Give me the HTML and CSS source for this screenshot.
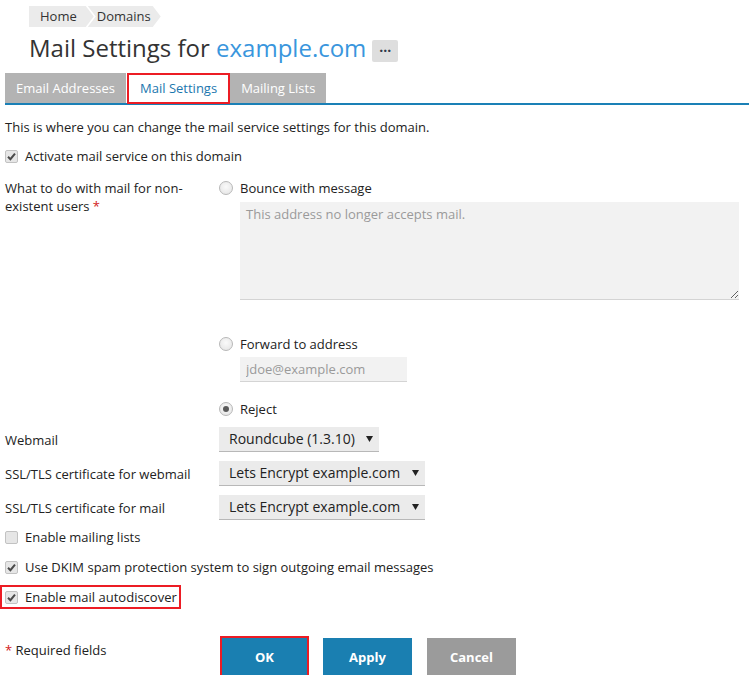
FILE: index.html
```html
<!DOCTYPE html>
<html>
<head>
<meta charset="utf-8">
<link rel="stylesheet" href="styles.css">
</head>
<body>
<div class="page">
  <div class="breadcrumbs">
    <span class="crumb">Home</span>
    <span class="crumb">Domains</span>
  </div>
  <div class="title-row">
    <h1 class="title">Mail Settings for <span class="domain">example.com</span></h1>
    <span class="more">&middot;&middot;&middot;</span>
  </div>
  <div class="tabs">
    <span class="tab">Email Addresses</span>
    <span class="tab active">Mail Settings</span>
    <span class="tab">Mailing Lists</span>
  </div>

  <div class="content">
    <p class="desc">This is where you can change the mail service settings for this domain.</p>

    <label class="check-row r-activate"><span class="cb on"><svg viewBox="0 0 13 13" width="13" height="13"><path d="M3 6.8 L5.4 9.2 L10 3.6" fill="none" stroke="#4a4a4a" stroke-width="2"/></svg></span>Activate mail service on this domain</label>

    <div class="form-row r-nonexist">
      <div class="flabel">What to do with mail for non-existent users <span class="req">*</span></div>
      <div class="fctrl">
        <div class="radio-line"><span class="rb"></span>Bounce with message</div>
        <div class="sub"><textarea class="ta" placeholder="This address no longer accepts mail."></textarea></div>
        <div class="radio-line r-forward"><span class="rb"></span>Forward to address</div>
        <div class="sub"><input class="inp" type="text" placeholder="jdoe@example.com"></div>
        <div class="radio-line r-reject"><span class="rb on"></span>Reject</div>
      </div>
    </div>

    <div class="form-row sel-row r-webmail">
      <div class="flabel">Webmail</div>
      <div class="fctrl"><div class="sel w160">Roundcube (1.3.10)<svg class="arr" width="7" height="6" viewBox="0 0 7 6"><path d="M0 0H7L3.5 6Z" fill="#222"/></svg></div></div>
    </div>
    <div class="form-row sel-row">
      <div class="flabel">SSL/TLS certificate for webmail</div>
      <div class="fctrl"><div class="sel w206">Lets Encrypt example.com<svg class="arr" width="7" height="6" viewBox="0 0 7 6"><path d="M0 0H7L3.5 6Z" fill="#222"/></svg></div></div>
    </div>
    <div class="form-row sel-row">
      <div class="flabel">SSL/TLS certificate for mail</div>
      <div class="fctrl"><div class="sel w206">Lets Encrypt example.com<svg class="arr" width="7" height="6" viewBox="0 0 7 6"><path d="M0 0H7L3.5 6Z" fill="#222"/></svg></div></div>
    </div>

    <label class="check-row r-lists"><span class="cb"></span>Enable mailing lists</label>
    <label class="check-row r-dkim"><span class="cb on"><svg viewBox="0 0 13 13" width="13" height="13"><path d="M3 6.8 L5.4 9.2 L10 3.6" fill="none" stroke="#4a4a4a" stroke-width="2"/></svg></span>Use DKIM spam protection system to sign outgoing email messages</label>
    <div class="highlight r-auto"><label class="check-row"><span class="cb on"><svg viewBox="0 0 13 13" width="13" height="13"><path d="M3 6.8 L5.4 9.2 L10 3.6" fill="none" stroke="#4a4a4a" stroke-width="2"/></svg></span>Enable mail autodiscover</label></div>

    <div class="actions">
      <div class="required"><span class="req">*</span> Required fields</div>
      <div class="buttons">
        <span class="btn-wrap"><button class="btn primary">OK</button></span>
        <button class="btn primary">Apply</button>
        <button class="btn grey">Cancel</button>
      </div>
    </div>
  </div>
</div>
</body>
</html>
```
FILE: styles.css
```css
* { box-sizing: border-box; }
html, body { margin: 0; padding: 0; background: #fff; }
body {
  font-family: "Open Sans", "DejaVu Sans", sans-serif;
  font-size: 13px;
  line-height: 18px;
  color: #222;
}
.page { width: 749px; }

.breadcrumbs { display: flex; margin: 6px 0 0 29px; height: 21px; }
.crumb {
  background: #ebebeb;
  height: 21px;
  line-height: 21px;
  color: #333;
  padding: 0 17px 0 11px;
  clip-path: polygon(0 0, calc(100% - 8px) 0, 100% 50%, calc(100% - 8px) 100%, 0 100%);
}
.crumb + .crumb {
  margin-left: -6px;
  padding: 0 10px 0 9px;
  clip-path: polygon(0 0, calc(100% - 8px) 0, 100% 50%, calc(100% - 8px) 100%, 0 100%, 8px 50%);
}

.title-row { display: flex; align-items: flex-end; margin: 5px 0 0 29px; }
.title {
  margin: 0;
  font-size: 24px;
  line-height: 32px;
  font-weight: 400;
  color: #333;
}
.domain { color: #3996dd; }
.more {
  margin: 0 0 2px 6px;
  width: 26px;
  height: 22px;
  background: #dedede;
  border-radius: 2px;
  font-size: 14px;
  line-height: 22px;
  text-align: center;
  color: #2f3a4a;
  font-weight: 700;
  letter-spacing: 0;
}

.tabs {
  display: flex;
  margin: 9px 0 0 5px;
  border-bottom: 2px solid #1a80b6;
  height: 32px;
}
.tab {
  height: 30px;
  line-height: 30px;
  background: #b3b3b3;
  color: #fff;
  padding: 0 11px;
  margin-right: 1px;
}
.tab.active {
  background: #fff;
  color: #1b77ae;
  border: 2px solid #ec1c24;
  line-height: 27px;
  height: 31px;
  padding: 0 11px;
  margin-right: 0;
}

.content { padding-left: 5px; }
.desc { margin: 13px 0 0; }

.check-row { display: flex; align-items: center; gap: 7px; height: 18px; }
.r-activate { margin-top: 11px; }
.r-lists { margin-top: 8px; }
.r-dkim { margin-top: 12px; }
.cb {
  width: 13px;
  height: 13px;
  border: 1px solid #c2c2c2;
  background: #e6e6e6;
  border-radius: 2px;
  display: flex;
  align-items: center;
  justify-content: center;
  overflow: hidden;
}
.cb svg { flex: none; }

.form-row { display: grid; grid-template-columns: 214px 1fr; }
.r-nonexist { margin-top: 14px; }
.flabel { padding-right: 20px; }
.req { color: #d21a1a; }
.radio-line { display: flex; align-items: center; gap: 7px; height: 18px; }
.r-forward { margin-top: 35px; }
.r-reject { margin-top: 18px; }
.rb {
  width: 14px;
  height: 14px;
  border-radius: 50%;
  border: 1px solid #b8b8b8;
  background: radial-gradient(circle at 50% 40%, #fafafa 0%, #e2e2e2 100%);
  display: flex;
  align-items: center;
  justify-content: center;
}
.rb.on::after {
  content: "";
  width: 6px;
  height: 6px;
  border-radius: 50%;
  background: #5a5a5a;
}
.sub { padding-left: 21px; }
.ta {
  display: block;
  margin-top: 5px;
  width: 499px;
  height: 98px;
  background: #f2f2f2;
  border: 0;
  border-bottom: 1px solid #d4d4d4;
  font: inherit;
  padding: 3px 6px;
  color: #222;
  resize: vertical;
}
.ta::placeholder, .inp::placeholder { color: #9a9a9a; }
.inp {
  display: block;
  margin-top: 4px;
  width: 167px;
  height: 25px;
  background: #f2f2f2;
  border: 0;
  border-bottom: 1px solid #d4d4d4;
  font: inherit;
  padding: 0 6px;
}

.sel-row { margin-top: 9px; align-items: center; }
.r-webmail { margin-top: 9px; }
.sel {
  display: flex;
  align-items: center;
  justify-content: space-between;
  height: 25px;
  background: #ebebeb;
  border-bottom: 1px solid #b8b8b8;
  padding: 0 6px 0 10px;
  color: #222;
  font-size: 14px;
}
.w160 { width: 160px; }
.w206 { width: 206px; }

.highlight {
  display: inline-block;
  margin: 9px 0 0 -5px;
  border: 2px solid #ec1c24;
  padding: 1px 2px 1px 3px;
}

.actions { display: grid; grid-template-columns: 214px 1fr; margin-top: 29px; }
.required { padding-top: 3px; }
.buttons { display: flex; gap: 15px; align-items: center; margin-left: 3px; }
.btn-wrap { border: 2px solid #ec1c24; margin: -2px -1px -2px -2px; display: flex; }
.btn {
  width: 86px;
  height: 37px;
  border: 0;
  font-family: inherit;
  font-size: 13px;
  font-weight: 700;
  color: #fff;
  padding: 0;
}
.btn.primary { background: #1a7fb1; }
.btn-wrap .btn { width: 85px; height: 37px; }
.btn.grey { background: #9b9b9b; width: 89px; }
.buttons > .btn.primary { width: 89px; }
```
